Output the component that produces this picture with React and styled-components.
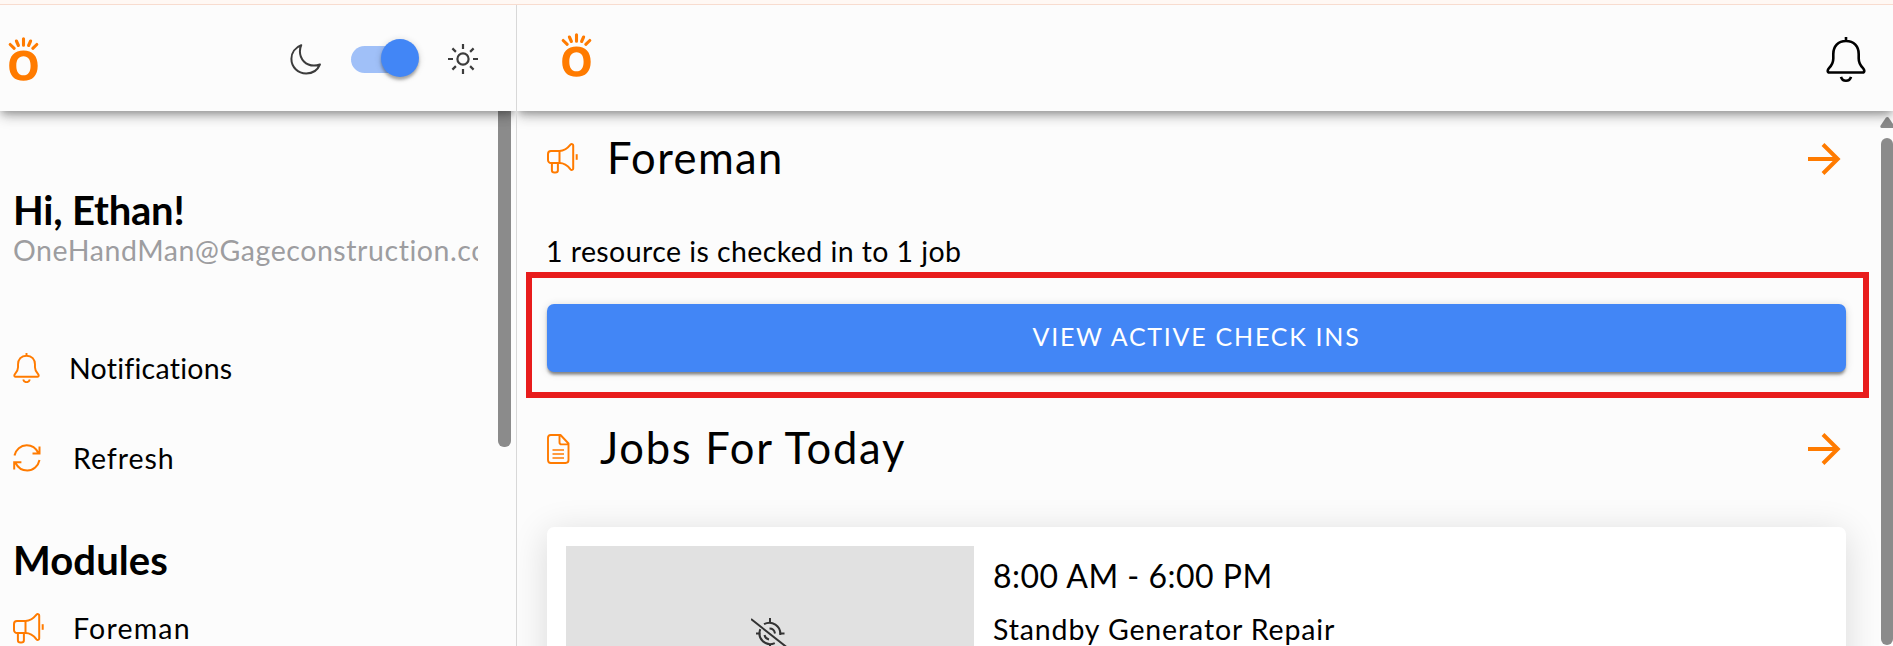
import React from "react";
import styled, { createGlobalStyle } from "styled-components";

const ORANGE = "#ff7b00";

const GlobalStyle = createGlobalStyle`
  * { box-sizing: border-box; }
  html, body { margin: 0; padding: 0; overflow: hidden; }
  body { background: #fcfcfc; color: #000; font-family: Lato, "Open Sans", sans-serif; }
  svg { display: block; flex: none; }
`;

const Page = styled.div`
  width: 100vw;
  height: 100vh;
  display: flex;
  flex-direction: column;
  overflow: hidden;
`;

const TopStrip = styled.div`
  flex: none;
  height: 5px;
  background: #fff8f4;
  border-bottom: 1px solid #f8dccf;
`;

const Columns = styled.div`
  flex: 1;
  min-height: 0;
  display: flex;
`;

const Sidebar = styled.aside`
  width: 517px;
  flex: none;
  display: flex;
  flex-direction: column;
  border-right: 1px solid #d8d8d8;
  overflow: hidden;
`;

const Main = styled.main`
  flex: 1;
  min-width: 0;
  display: flex;
  flex-direction: column;
  overflow: hidden;
`;

const Header = styled.header`
  flex: none;
  height: 106px;
  display: flex;
  align-items: flex-start;
  background: #fcfcfc;
  box-shadow: 0 4px 7px -2px rgba(0, 0, 0, 0.22), 0 6px 11px -1px rgba(0, 0, 0, 0.2), 0 2px 18px rgba(0, 0, 0, 0.12);
  position: relative;
  z-index: 1;
`;

const SideHeader = styled(Header)`
  padding: 32px 38px 0 8px;
  justify-content: space-between;
`;

const MainHeader = styled(Header)`
  padding: 28px 27px 0 44px;
  justify-content: space-between;
  & > :last-child { margin-top: 4px; }
`;

const ThemeControls = styled.div`
  display: flex;
  align-items: center;
  height: 44px;
  gap: 29px;
`;

const Track = styled.div`
  width: 68px;
  height: 27px;
  margin-left: 1px;
  display: flex;
  align-items: center;
  justify-content: flex-end;
  border-radius: 14px;
  background: linear-gradient(90deg, #a0c0f8 50px, transparent 50px);
`;

const Knob = styled.div`
  width: 38px;
  height: 38px;
  flex: none;
  margin-top: -2px;
  border-radius: 50%;
  background: #4286f6;
  box-shadow: 0 3px 3px rgba(0, 0, 0, 0.28), 0 1px 7px rgba(0, 0, 0, 0.16);
`;

const SideBody = styled.div`
  flex: 1;
  min-height: 0;
  display: flex;
  justify-content: space-between;
`;

const SideContent = styled.div`
  width: 478px;
  padding: 75px 0 0 13px;
  overflow: hidden;
`;

const SideThumb = styled.div`
  width: 13px;
  height: 336px;
  margin-right: 5px;
  border-radius: 0 0 6px 6px;
  background: #8b8b8b;
`;

const Text = styled.span`
  display: block;
  white-space: pre;
  font-size: ${(p) => p.$size}px;
  line-height: ${(p) => p.$line}px;
  letter-spacing: ${(p) => p.$spacing || 0}px;
`;

const Heading = styled(Text)`
  font-weight: 700;
  margin: ${(p) => p.$margin || "0"};
`;

const Title = styled(Text)`
  margin-top: -4px;
`;

const Email = styled(Text)`
  color: #9d9da0;
  overflow: hidden;
`;

const MenuItem = styled.div`
  display: flex;
  align-items: center;
  height: 40px;
  margin-top: ${(p) => p.$top}px;
  gap: ${(p) => p.$gap}px;
`;

const MainBody = styled.div`
  flex: 1;
  min-height: 0;
  display: flex;
`;

const MainContent = styled.div`
  flex: 1;
  min-width: 0;
  padding: 20px 0 0 9px;
`;

const SectionHeader = styled.div`
  height: 56px;
  display: flex;
  align-items: center;
  padding: 0 39px 1px 21px;
  gap: ${(p) => p.$gap}px;
  & > :last-child { margin-left: auto; }
`;

const Summary = styled(Text)`
  margin: 46px 0 3px 20px;
`;

const Highlight = styled.div`
  width: 1343px;
  height: 126px;
  padding: 26px 17px 0 15px;
  border: 6px solid #e81c1c;
  margin-bottom: 23px;
`;

const PrimaryButton = styled.button`
  display: flex;
  align-items: center;
  justify-content: center;
  width: 1299px;
  height: 68px;
  padding: 0 0 4px;
  border: 0;
  border-radius: 7px;
  background: #4286f6;
  color: #fff;
  font-family: inherit;
  box-shadow: 0 4px 3px -2px rgba(0, 0, 0, 0.3), 0 3px 3px rgba(0, 0, 0, 0.2), 0 1px 9px rgba(0, 0, 0, 0.14);
`;

const Card = styled.article`
  width: 1299px;
  height: 300px;
  margin: 50px 0 0 21px;
  padding: 19px;
  display: flex;
  gap: 19px;
  border-radius: 7px;
  background: #fff;
  box-shadow: 0 6px 36px rgba(0, 0, 0, 0.14);
`;

const Thumbnail = styled.div`
  width: 408px;
  height: 260px;
  display: flex;
  justify-content: center;
  padding-top: 72px;
  background: #e1e1e1;
`;

const JobInfo = styled.div`
  display: flex;
  flex-direction: column;
  padding-top: 10px;
  gap: 15px;
`;

const Scrollbar = styled.div`
  width: 13px;
  flex: none;
  padding-top: 6px;
  display: flex;
  flex-direction: column;
  align-items: flex-end;
`;

const ScrollThumb = styled.div`
  width: 12px;
  height: 507px;
  margin-top: 10px;
  border-radius: 6px;
  background: #8b8b8b;
`;

const Logo = () => (
  <svg width="31" height="45" viewBox="0 0 31 45">
    <path
      fill={ORANGE}
      fillRule="evenodd"
      d="M15.500 13.600C24.500 13.600 29.700 19 29.700 28.700S24.500 43.800 15.500 43.800 1.200 38.400 1.200 28.700 6.500 13.600 15.500 13.600zM15.500 19.200C10.800 19.200 8.300 22.600 8.300 28.700S10.800 38.300 15.500 38.300 22.600 34.800 22.600 28.700 20.200 19.200 15.500 19.200z"
    />
    <path
      d="M15.500 1.700v6.600M8.400 4l2 4.500M22.600 4l-2 4.500M2.200 7.500l4 3.800M28.800 7.500l-4 3.800"
      fill="none"
      stroke={ORANGE}
      strokeWidth="3.1"
      strokeLinecap="round"
    />
  </svg>
);

const Moon = () => (
  <svg width="31" height="31" viewBox="0 0 31 31" fill="none" stroke="#3c3c3c" strokeWidth="2" strokeLinejoin="round">
    <path d="M11.200 1.200C5.300 3.300 1.400 8.600 1.400 14.800 1.400 23.200 7.900 29.500 16.200 29.500c6.200 0 11.400-3.400 13.700-9C27.900 21.300 26 21.600 24 21.600 15.900 21.600 9.900 15.400 9.900 7.300c0-2.200.4-4.200 1.300-6.100z" />
  </svg>
);

const Sun = () => (
  <svg width="30" height="30" viewBox="0 0 30 30" fill="none" stroke="#3c3c3c" strokeWidth="2.200">
    <circle cx="15" cy="15" r="5.600" />
    <path d="M15 0v5M15 25v5M0 15h5M25 15h5M4.400 4.400l3.500 3.500M22.100 22.100l3.500 3.500M25.600 4.400l-3.500 3.500M7.900 22.100l-3.500 3.500" />
  </svg>
);

const Bell = ({ width, height, color, stroke }) => (
  <svg width={width} height={height} viewBox="0 0 40 45" fill="none" stroke={color} strokeWidth={stroke}>
    <path d="M20 0v4M20 4C12 4 7.300 9.600 7.300 17v4.500c0 4-1.500 6.800-4.300 9.600-1.400 1.400-2.200 4.400.5 4.400h33c2.700 0 1.900-3 .5-4.400-2.800-2.800-4.300-5.600-4.300-9.600V17C32.700 9.600 28 4 20 4z" strokeLinejoin="round" />
    <path d="M15 39.800c.7 2.500 2.500 3.900 5 3.900s4.300-1.400 5-3.900" />
  </svg>
);

const Refresh = () => (
  <svg width="28" height="28" viewBox="0 0 28 28" fill="none" stroke={ORANGE} strokeWidth="2">
    <path d="M1.500 11.500C2.700 5.500 7.700 1.300 13.700 1.300c5.200 0 9.300 2.900 11.700 7.700M26.500 2.500v7h-7M26.500 16c-1.200 6-6.200 10.500-12.200 10.500-5.200 0-9.500-3-11.900-7.800M1.200 25.500v-7.200h7.200" />
  </svg>
);

const Megaphone = () => (
  <svg width="31" height="31" viewBox="0 0 31 31" fill="none" stroke={ORANGE} strokeWidth="2" strokeLinejoin="round">
    <path d="M4 8h8.500v12H4c-1.800 0-3-1.300-3-3.100v-5.800C1 9.300 2.200 8 4 8z" />
    <path d="M12.500 8C17 8 21.500 4.200 23.500 1.700c.9-1.100 2.700-.7 2.700.8v23c0 1.500-1.800 1.900-2.700.8-2-2.600-6.500-6.300-11-6.300" />
    <path d="M4.900 20v7.200c0 1.400 1 2.200 2.500 2.200h.9c1.600 0 2.600-.8 2.600-2.200V20" />
    <path d="M29.700 11.200v5.600" />
  </svg>
);

const Doc = () => (
  <svg width="23" height="30" viewBox="0 0 23 30" fill="none" stroke={ORANGE} strokeWidth="1.900" strokeLinejoin="round">
    <path d="M3.700 1h9.800l8 8.500v16.600c0 1.900-1 2.900-2.900 2.900H3.800C1.900 29 1 28 1 26.100V3.700C1 1.900 1.900 1 3.700 1zM12.500 1v7.200c0 1.500.7 2.200 2.200 2.200h6.800" />
    <path d="M5.500 16h11.500M5.500 20h11.500M5.500 24h11.500" strokeWidth="1.700" />
  </svg>
);

const Arrow = () => (
  <svg width="33" height="32" viewBox="0 0 33 32" fill="none" stroke={ORANGE} strokeWidth="4">
    <path d="M0 16h30M15 1.500L29.700 16 15 30.500" />
  </svg>
);

const NoLocation = () => (
  <svg width="38" height="38" viewBox="0 0 38 38" fill="none" stroke="#333" strokeWidth="2">
    <path d="M0 1l38 30M19 0v5M5 15.500h4.500M28.500 15.500h5M19 26v5" />
    <path d="M13 6.200c8-4.200 17 1.800 16.300 10.800M9.300 11.200c-3.500 9 5 18 14.500 14M18.500 10.500c3 0 5 2 5.500 5M13.500 17c.5 2.500 2 4 4.500 4.500" />
  </svg>
);

const ScrollUp = () => (
  <svg width="13" height="11" viewBox="0 0 13 11" fill="#8b8b8b">
    <path d="M5.800.8Q7.300-.6 8.800.8L13 7v4H1.500Q-.3 10.500.6 8.500z" />
  </svg>
);

export default function App() {
  return (
    <Page>
      <GlobalStyle />
      <TopStrip />
      <Columns>
        <Sidebar>
          <SideHeader>
            <Logo />
            <ThemeControls>
              <Moon />
              <Track><Knob /></Track>
              <Sun />
            </ThemeControls>
          </SideHeader>
          <SideBody>
            <SideContent>
              <Heading $size={40} $line={48} $spacing={-0.2}>Hi, Ethan!</Heading>
              <Email $size={28.5} $line={32} $spacing={0.57}>OneHandMan@Gageconstruction.com</Email>
              <MenuItem $top={82} $gap={29}>
                <Bell width={27} height={30} color={ORANGE} stroke={2.9} />
                <Text $size={28.5} $line={40} $spacing={0.25}>Notifications</Text>
              </MenuItem>
              <MenuItem $top={50} $gap={32}>
                <Refresh />
                <Text $size={28.5} $line={40} $spacing={0.95}>Refresh</Text>
              </MenuItem>
              <Heading $size={40} $line={48} $margin="58px 0 0" $spacing={0.1}>Modules</Heading>
              <MenuItem $top={24} $gap={29}>
                <Megaphone />
                <Text $size={28.5} $line={40} $spacing={1.2}>Foreman</Text>
              </MenuItem>
            </SideContent>
            <SideThumb />
          </SideBody>
        </Sidebar>
        <Main>
          <MainHeader>
            <Logo />
            <Bell width={40} height={45} color="#000" stroke={2.6} />
          </MainHeader>
          <MainBody>
            <MainContent>
              <SectionHeader $gap={29}>
                <Megaphone />
                <Title $size={43.5} $line={56} $spacing={1.4}>Foreman</Title>
                <Arrow />
              </SectionHeader>
              <Summary $size={28.5} $line={36} $spacing={0.42}>1 resource is checked in to 1 job</Summary>
              <Highlight>
                <PrimaryButton>
                  <Text $size={25} $line={36} $spacing={1.75}>VIEW ACTIVE CHECK INS</Text>
                </PrimaryButton>
              </Highlight>
              <SectionHeader $gap={30}>
                <Doc />
                <Title $size={43.5} $line={56} $spacing={1.75}>Jobs For Today</Title>
                <Arrow />
              </SectionHeader>
              <Card>
                <Thumbnail><NoLocation /></Thumbnail>
                <JobInfo>
                  <Text $size={32} $line={40} $spacing={0.5}>8:00 AM - 6:00 PM</Text>
                  <Text $size={28.5} $line={36} $spacing={0.87}>Standby Generator Repair</Text>
                </JobInfo>
              </Card>
            </MainContent>
            <Scrollbar>
              <ScrollUp />
              <ScrollThumb />
            </Scrollbar>
          </MainBody>
        </Main>
      </Columns>
    </Page>
  );
}
